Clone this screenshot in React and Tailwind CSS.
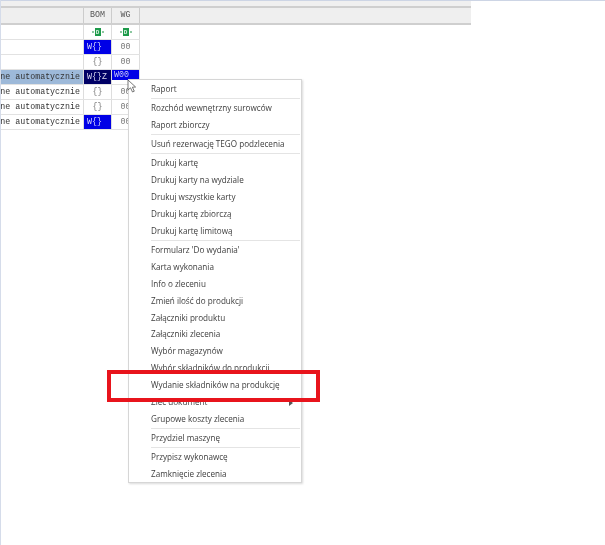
const rows = [
  { name: "", bom: "D", wg: "D", bomTone: "green", wgTone: "green" },
  { name: "", bom: "W{}", wg: "00", bomTone: "blue" },
  { name: "", bom: "{}", wg: "00" },
  { name: "ne automatycznie", bom: "W{}Z", wg: "W00", bomTone: "navy", wgTone: "short", selected: true },
  { name: "ne automatycznie", bom: "{}", wg: "00" },
  { name: "ne automatycznie", bom: "{}", wg: "00" },
  { name: "ne automatycznie", bom: "W{}", wg: "00", bomTone: "blue" },
];

function Cell({ value, tone }) {
  if (tone === "green") {
    return (
      <div className="w-[28px] h-full shrink-0 flex items-center justify-center gap-[1px] border-r border-[#dddddd] text-[#5aa870]">
        <span className="w-[2px] h-[2px] bg-[#8cc8a0]" />
        <span className="w-[6px] h-[8px] bg-[#1d9a4a] text-[#d8f0e0] text-[6px] font-bold flex items-center justify-center">{value}</span>
        <span className="w-[2px] h-[2px] bg-[#8cc8a0]" />
      </div>
    );
  }
  if (tone === "short") {
    return (
      <div className="w-[28px] h-full shrink-0 border-r border-[#dddddd]">
        <div className="h-[10px] bg-[#0000e6] text-[#c8c8f4] pl-[2px] flex items-center">{value}</div>
      </div>
    );
  }
  const cls =
    tone === "blue"
      ? "bg-[#0000e6] text-[#d8d8f8] justify-start pl-[3px]"
      : tone === "navy"
        ? "bg-[#000066] text-[#d8d8f0] justify-start pl-[3px]"
        : "text-[#777777] justify-center";
  return (
    <div className={`w-[28px] h-full shrink-0 flex items-center border-r border-[#dddddd] ${cls}`}>
      {value}
    </div>
  );
}

const groups = [
  ["Raport"],
  ["Rozchód wewnętrzny surowców", "Raport zbiorczy"],
  ["Usuń rezerwację TEGO podzlecenia"],
  ["Drukuj kartę", "Drukuj karty na wydziale", "Drukuj wszystkie karty", "Drukuj kartę zbiorczą", "Drukuj kartę limitową"],
  ["Formularz 'Do wydania'", "Karta wykonania", "Info o zleceniu", "Zmień ilość do produkcji", "Załączniki produktu", "Załączniki zlecenia", "Wybór magazynów", "Wybór składników do produkcji", "Wydanie składników na produkcję", "Zleć dokument", "Grupowe koszty zlecenia"],
  ["Przydziel maszynę"],
  ["Przypisz wykonawcę", "Zamknięcie zlecenia"],
];

export default function App() {
  return (
    <div className="relative w-[605px] h-[545px] bg-white overflow-hidden blur-[0.7px] border-l border-[#d5dcea] font-['Open_Sans',sans-serif]">
      <div className="h-[1px] bg-[#cdd5e5]" />
      <div className="w-[470px] font-['Liberation_Mono',monospace] text-[8.3px] text-[#333333]">
        <div className="h-[5px] bg-[#f0f0f0]" />
        <div className="h-[2px] bg-[#cfcfcf]" />
        <div className="h-[15px] bg-[#efefef] flex text-[#555555]">
          <div className="w-[83px] border-r border-[#cccccc]" />
          <div className="w-[28px] border-r border-[#cccccc] flex items-center justify-center">BOM</div>
          <div className="w-[28px] border-r border-[#cccccc] flex items-center justify-center">WG</div>
        </div>
        <div className="h-[2px] bg-[#cfcfcf]" />
      </div>
      <div className="w-[139px] font-['Liberation_Mono',monospace] text-[8.3px]">
        {rows.map((r, i) => (
          <div key={i} className="h-[15px] flex border-b border-[#e2e2e2] text-[#333333]">
            <div className={`w-[83px] h-full shrink-0 flex items-center justify-end pr-[3px] overflow-hidden whitespace-nowrap border-r border-[#dddddd] ${r.selected ? "bg-[#9db9d9]" : ""}`}>
              {r.name}
            </div>
            <Cell value={r.bom} tone={r.bomTone} />
            <Cell value={r.wg} tone={r.wgTone} />
          </div>
        ))}
      </div>

      <div className="absolute left-[127px] top-[79px] w-[174px] h-[404px] bg-white border border-[#d6d6d6] shadow-[1px_1px_2px_rgba(0,0,0,0.15)] pt-[1px] text-[8.15px] text-[#3c3c3c]">
        {groups.map((g, i) => (
          <div key={i} className={i > 0 ? "border-t border-[#e4e4e4] ml-[22px] mr-[1px] mt-[0.5px] pt-[0.5px]" : "ml-[22px] mr-[1px]"}>
            {g.map((t) => (
              <div key={t} className="relative h-[16.95px] flex items-center whitespace-nowrap">
                {t}
                {t === "Zleć dokument" && (
                  <svg className="absolute right-[7px] top-[6px]" width="4" height="6" viewBox="0 0 4 6">
                    <path d="M0 0L4 3L0 6Z" fill="#555555" />
                  </svg>
                )}
              </div>
            ))}
          </div>
        ))}
      </div>

      <svg className="absolute left-[126px] top-[79px]" width="12" height="15" viewBox="0 0 12 15">
        <path d="M1 1L1 11L3.5 8.8L5.5 13L7.3 12.2L5.4 8.2L8.6 8Z" fill="#ffffff" stroke="#555555" strokeWidth="0.8" />
      </svg>

      <div className="absolute left-[106px] top-[370px] w-[213px] h-[32px] border-[4px] border-[#e8141c]" />
    </div>
  );
}
